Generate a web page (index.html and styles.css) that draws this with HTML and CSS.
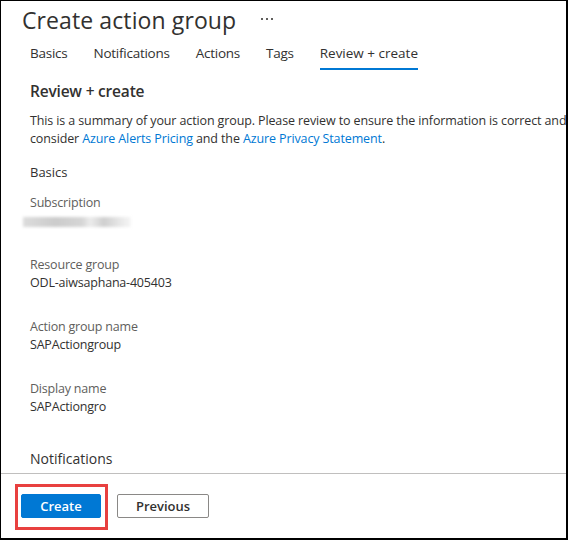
FILE: index.html
```html
<!DOCTYPE html>
<html>
<head>
<meta charset="utf-8">
<link rel="stylesheet" href="styles.css">
</head>
<body>
<div class="frame">
  <div class="main">
    <div class="title-row">
      <h1 class="title">Create action group</h1>
      <span class="more"><i></i><i></i><i></i></span>
    </div>
    <nav class="tabs">
      <span class="tab">Basics</span>
      <span class="tab">Notifications</span>
      <span class="tab">Actions</span>
      <span class="tab">Tags</span>
      <span class="tab active">Review + create</span>
    </nav>
    <h2 class="heading">Review + create</h2>
    <p class="intro">This is a summary of your action group. Please review to ensure the information is correct and<br>consider <a class="link">Azure Alerts Pricing</a> and the <a class="link">Azure Privacy Statement</a>.</p>
    <div class="section">Basics</div>
    <div class="field">
      <div class="label">Subscription</div>
      <div class="value"><span class="blur"></span></div>
    </div>
    <div class="field">
      <div class="label">Resource group</div>
      <div class="value">ODL-aiwsaphana-405403</div>
    </div>
    <div class="field">
      <div class="label">Action group name</div>
      <div class="value">SAPActiongroup</div>
    </div>
    <div class="field">
      <div class="label">Display name</div>
      <div class="value">SAPActiongro</div>
    </div>
    <div class="section2">Notifications</div>
  </div>
  <div class="footer">
    <span class="highlight"><button class="btn primary">Create</button></span>
    <button class="btn secondary">Previous</button>
  </div>
</div>
</body>
</html>
```
FILE: styles.css
```css
* { box-sizing: border-box; }
html, body { margin: 0; padding: 0; background: #fff; }
body {
  font-family: "Open Sans", "Noto Sans", sans-serif;
  color: #323130;
}
.frame {
  width: 568px;
  height: 540px;
  border-style: solid;
  border-color: #000;
  border-width: 1px 2px 2px 1px;
  display: flex;
  flex-direction: column;
  overflow: hidden;
}
.main {
  height: 473px;
  overflow: hidden;
  border-bottom: 1px solid #c0bfbe;
}
.title-row {
  display: flex;
  align-items: center;
  padding: 3px 0 0 21px;
  height: 35px;
}
.title {
  margin: 0;
  font-size: 23px;
  font-weight: 400;
  line-height: 32px;
  letter-spacing: 0.1px;
  color: #323130;
}
.more {
  display: flex;
  gap: 3px;
  margin-left: 25px;
  margin-top: -2px;
}
.more i {
  display: block;
  width: 2px;
  height: 2px;
  background: #605e5c;
}
.tabs {
  display: flex;
  gap: 26px;
  padding: 7px 0 0 29px;
  font-size: 13.5px;
}
.tab {
  line-height: 20px;
  padding-bottom: 5px;
  border-bottom: 2px solid transparent;
  letter-spacing: -0.25px;
}
.tab.active { border-bottom-color: #0078d4; letter-spacing: 0; }
.heading {
  margin: 10px 0 0 29px;
  font-size: 15.5px;
  font-weight: 600;
  line-height: 22px;
  letter-spacing: -0.2px;
}
.intro {
  margin: 10px 0 0 29px;
  font-size: 12.5px;
  line-height: 18px;
  white-space: nowrap;
  letter-spacing: -0.12px;
}
.link { color: #0078d4; }
.section {
  margin: 15px 0 0 29px;
  font-size: 13px;
  line-height: 18px;
}
.field {
  margin: 13px 0 0 29px;
  font-size: 12.5px;
  line-height: 18px;
  letter-spacing: -0.2px;
}
.field + .field { margin-top: 26px; }
.label { color: #605e5c; }
.value { color: #323130; height: 18px; }
.blur {
  display: inline-block;
  vertical-align: middle;
  width: 108px;
  height: 10px;
  margin-left: -7px;
  background: linear-gradient(90deg, #dcdcdc 0%, #cbcbcb 30%, #d6d6d6 55%, #ececec 62%, #cfcfcf 75%, #e8e8e8 90%, #f6f6f6 100%);
  filter: blur(1.5px);
}
.section2 {
  margin: 33px 0 0 29px;
  font-size: 14px;
  line-height: 20px;
}
.footer {
  display: flex;
  align-items: flex-start;
  padding: 10px 0 0 14px;
}
.highlight {
  display: inline-flex;
  border: 3px solid #e8403f;
  padding: 7px 4px 9px 3px;
}
.btn {
  height: 24px;
  font-family: inherit;
  font-size: 13px;
  font-weight: 600;
  border-radius: 2px;
  padding: 0;
  line-height: 22px;
}
.primary {
  width: 80px;
  background: #0078d4;
  color: #fff;
  border: 1px solid #0078d4;
}
.secondary {
  width: 92px;
  margin: 10px 0 0 9px;
  background: #fff;
  color: #323130;
  border: 1px solid #8a8886;
}
```
